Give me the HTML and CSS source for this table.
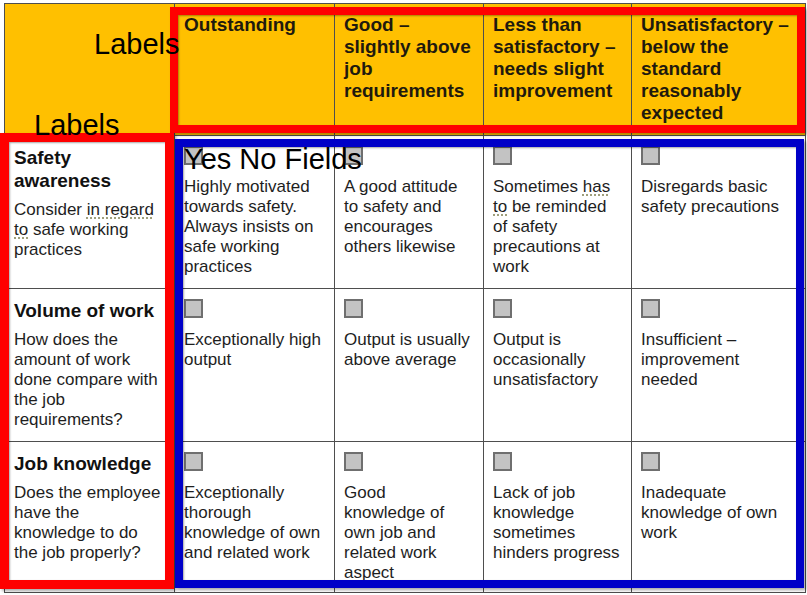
FILE: index.html
```html
<!DOCTYPE html>
<html>
<head>
<meta charset="utf-8">
<link rel="stylesheet" href="styles.css">
</head>
<body>
<div class="page">
  <div class="grid">
    <div class="cell head"></div>
    <div class="cell head">Outstanding</div>
    <div class="cell head">Good –<br>slightly above<br>job<br>requirements</div>
    <div class="cell head">Less than<br>satisfactory –<br>needs slight<br>improvement</div>
    <div class="cell head">Unsatisfactory –<br>below the<br>standard<br>reasonably<br>expected</div>

    <div class="cell label">
      <div class="title">Safety<br>awareness</div>
      <div class="desc">Consider <span class="dot">in regard</span><br><span class="dot">to</span> safe working<br>practices</div>
    </div>
    <div class="cell opt"><span class="box"></span><div class="desc">Highly motivated<br>towards safety.<br>Always insists on<br>safe working<br>practices</div></div>
    <div class="cell opt"><span class="box"></span><div class="desc">A good attitude<br>to safety and<br>encourages<br>others likewise</div></div>
    <div class="cell opt"><span class="box"></span><div class="desc">Sometimes <span class="dot">has</span><br><span class="dot">to</span> be reminded<br>of safety<br>precautions at<br>work</div></div>
    <div class="cell opt"><span class="box"></span><div class="desc">Disregards basic<br>safety precautions</div></div>

    <div class="cell label">
      <div class="title">Volume of work</div>
      <div class="desc">How does the<br>amount of work<br>done compare with<br>the job<br>requirements?</div>
    </div>
    <div class="cell opt"><span class="box"></span><div class="desc">Exceptionally high<br>output</div></div>
    <div class="cell opt"><span class="box"></span><div class="desc">Output is usually<br>above average</div></div>
    <div class="cell opt"><span class="box"></span><div class="desc">Output is<br>occasionally<br>unsatisfactory</div></div>
    <div class="cell opt"><span class="box"></span><div class="desc">Insufficient –<br>improvement<br>needed</div></div>

    <div class="cell label">
      <div class="title">Job knowledge</div>
      <div class="desc">Does the employee<br>have the<br>knowledge to do<br>the job properly?</div>
    </div>
    <div class="cell opt"><span class="box"></span><div class="desc">Exceptionally<br>thorough<br>knowledge of own<br>and related work</div></div>
    <div class="cell opt"><span class="box"></span><div class="desc">Good<br>knowledge of<br>own job and<br>related work<br>aspect</div></div>
    <div class="cell opt"><span class="box"></span><div class="desc">Lack of job<br>knowledge<br>sometimes<br>hinders progress</div></div>
    <div class="cell opt"><span class="box"></span><div class="desc">Inadequate<br>knowledge of own<br>work</div></div>
  </div>

  <div class="frame red frame-top"></div>
  <div class="frame red frame-left"></div>
  <div class="frame blue frame-fields"></div>

  <div class="note note-labels-top">Labels</div>
  <div class="note note-labels-left">Labels</div>
  <div class="note note-fields">Yes No Fields</div>
</div>
</body>
</html>
```

FILE: styles.css
```css
html, body {
  margin: 0;
  padding: 0;
  background: #ffffff;
}

.page {
  position: relative;
  width: 807px;
  height: 595px;
  overflow: hidden;
  font-family: "Liberation Sans", Arial, sans-serif;
  color: #1e1e1e;
}

.grid {
  display: grid;
  grid-template-columns: 169px 159px 148px 147px 173px;
  grid-template-rows: 131px 152px 152px 150px;
  gap: 1px;
  padding: 1px;
  margin: 3px 0 0 4px;
  width: max-content;
  background: #4e4e4e;
}

.cell {
  background: #ffffff;
  padding: 10px 4px 0 9px;
  white-space: nowrap;
  overflow: hidden;
}

.head {
  background: #ffc000;
  font-weight: bold;
  font-size: 19px;
  line-height: 22px;
  color: #1f1a0e;
}

.title {
  font-weight: bold;
  font-size: 19px;
  line-height: 23px;
  color: #111;
}

.desc {
  font-size: 17px;
  line-height: 20px;
}

.label .desc {
  margin-top: 8px;
}

.box {
  display: block;
  width: 19px;
  height: 19px;
  box-sizing: border-box;
  border: 2px solid #6f6f6f;
  background: #c3c3c3;
  margin-bottom: 12px;
}

.dot {
  text-decoration: underline dotted #8f8f66;
  text-underline-offset: 3px;
}

.frame {
  position: absolute;
  box-sizing: border-box;
  box-shadow: inset 1px 1px 2px rgba(0, 0, 0, 0.35), 2px 2px 3px rgba(0, 0, 0, 0.35);
}

.red {
  border: 8px solid #ff0000;
}

.blue {
  border: 8px solid #0000c8;
}

.frame-top {
  left: 170px;
  top: 7px;
  width: 635px;
  height: 126px;
}

.frame-left {
  left: 0;
  top: 133px;
  width: 174px;
  height: 456px;
  border-width: 9px;
}

.frame-fields {
  left: 175px;
  top: 139px;
  width: 629px;
  height: 449px;
}

.note {
  position: absolute;
  font-family: "Liberation Sans", Arial, sans-serif;
  font-size: 29px;
  line-height: 29px;
  color: #000;
  white-space: nowrap;
}

.note-labels-top {
  left: 94px;
  top: 30px;
}

.note-labels-left {
  left: 34px;
  top: 111px;
}

.note-fields {
  left: 184px;
  top: 145px;
}
```
